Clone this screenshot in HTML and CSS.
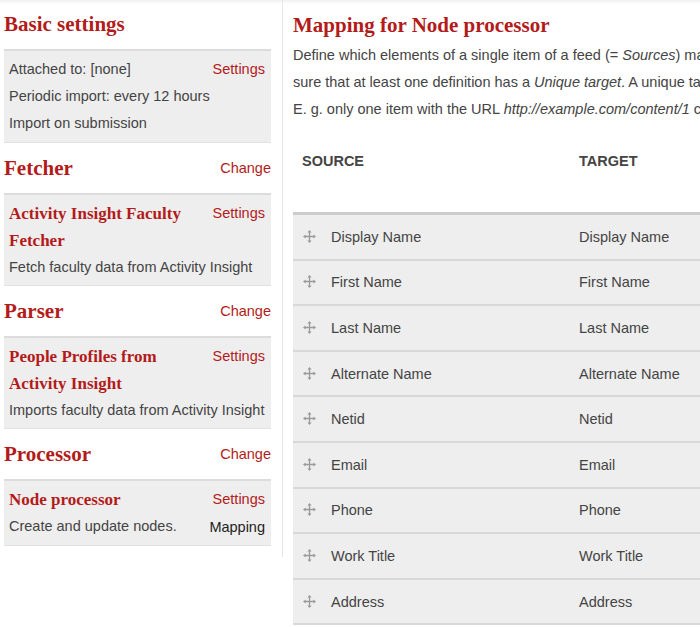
FILE: index.html
```html
<!DOCTYPE html>
<html>
<head>
<meta charset="utf-8">
<title>Feeds importer</title>
<link rel="stylesheet" href="styles.css">
</head>
<body>
<div class="page">
  <aside class="sidebar">
    <section class="group">
      <div class="group-head"><h2 class="group-title">Basic settings</h2></div>
      <div class="box">
        <div class="box-row"><span>Attached to: [none]</span><a class="link" href="#">Settings</a></div>
        <div class="box-row"><span>Periodic import: every 12 hours</span></div>
        <div class="box-row"><span>Import on submission</span></div>
      </div>
    </section>
    <section class="group">
      <div class="group-head"><h2 class="group-title">Fetcher</h2><a class="link" href="#">Change</a></div>
      <div class="box plugin">
        <div class="plugin-main">
          <h3 class="plugin-title">Activity Insight Faculty Fetcher</h3>
          <p class="plugin-desc">Fetch faculty data from Activity Insight</p>
        </div>
        <div class="plugin-links"><a class="link" href="#">Settings</a></div>
      </div>
    </section>
    <section class="group">
      <div class="group-head"><h2 class="group-title">Parser</h2><a class="link" href="#">Change</a></div>
      <div class="box plugin">
        <div class="plugin-main">
          <h3 class="plugin-title">People Profiles from Activity Insight</h3>
          <p class="plugin-desc">Imports faculty data from Activity Insight</p>
        </div>
        <div class="plugin-links"><a class="link" href="#">Settings</a></div>
      </div>
    </section>
    <section class="group">
      <div class="group-head"><h2 class="group-title">Processor</h2><a class="link" href="#">Change</a></div>
      <div class="box plugin">
        <div class="plugin-main">
          <h3 class="plugin-title">Node processor</h3>
          <p class="plugin-desc">Create and update nodes.</p>
        </div>
        <div class="plugin-links"><a class="link" href="#">Settings</a><a class="link active" href="#">Mapping</a></div>
      </div>
    </section>
  </aside>

  <main class="content">
    <h1 class="content-title">Mapping for Node processor</h1>
    <p class="intro">Define which elements of a single item of a feed (= <em>Sources</em>) map to which content pieces in Drupal (= <em>Targets</em>). Make<br>sure that at least one definition has a <em>Unique target</em>. A unique target means that a value for a target can only occur once.<br>E. g. only one item with the URL <em>http://example.com/content/1</em> can exist.</p>

    <table class="mapping">
      <thead>
        <tr><th class="col-source">Source</th><th class="col-target">Target</th><th class="col-config">Target configuration</th></tr>
      </thead>
      <tbody>
        <tr><td><span class="drag"><svg width="13" height="13" viewBox="0 0 13 13"><path d="M6.5 2v9M2 6.5h9" stroke="#9a9a9a" stroke-width="1.3" fill="none"/><path d="M6.5 0L4.4 2.6h4.2zM6.5 13l-2.1-2.6h4.2zM0 6.5l2.6-2.1v4.2zM13 6.5l-2.6-2.1v4.2z" fill="#9a9a9a"/></svg></span>Display Name</td><td>Display Name</td><td></td></tr>
        <tr><td><span class="drag"><svg width="13" height="13" viewBox="0 0 13 13"><path d="M6.5 2v9M2 6.5h9" stroke="#9a9a9a" stroke-width="1.3" fill="none"/><path d="M6.5 0L4.4 2.6h4.2zM6.5 13l-2.1-2.6h4.2zM0 6.5l2.6-2.1v4.2zM13 6.5l-2.6-2.1v4.2z" fill="#9a9a9a"/></svg></span>First Name</td><td>First Name</td><td></td></tr>
        <tr><td><span class="drag"><svg width="13" height="13" viewBox="0 0 13 13"><path d="M6.5 2v9M2 6.5h9" stroke="#9a9a9a" stroke-width="1.3" fill="none"/><path d="M6.5 0L4.4 2.6h4.2zM6.5 13l-2.1-2.6h4.2zM0 6.5l2.6-2.1v4.2zM13 6.5l-2.6-2.1v4.2z" fill="#9a9a9a"/></svg></span>Last Name</td><td>Last Name</td><td></td></tr>
        <tr><td><span class="drag"><svg width="13" height="13" viewBox="0 0 13 13"><path d="M6.5 2v9M2 6.5h9" stroke="#9a9a9a" stroke-width="1.3" fill="none"/><path d="M6.5 0L4.4 2.6h4.2zM6.5 13l-2.1-2.6h4.2zM0 6.5l2.6-2.1v4.2zM13 6.5l-2.6-2.1v4.2z" fill="#9a9a9a"/></svg></span>Alternate Name</td><td>Alternate Name</td><td></td></tr>
        <tr><td><span class="drag"><svg width="13" height="13" viewBox="0 0 13 13"><path d="M6.5 2v9M2 6.5h9" stroke="#9a9a9a" stroke-width="1.3" fill="none"/><path d="M6.5 0L4.4 2.6h4.2zM6.5 13l-2.1-2.6h4.2zM0 6.5l2.6-2.1v4.2zM13 6.5l-2.6-2.1v4.2z" fill="#9a9a9a"/></svg></span>Netid</td><td>Netid</td><td></td></tr>
        <tr><td><span class="drag"><svg width="13" height="13" viewBox="0 0 13 13"><path d="M6.5 2v9M2 6.5h9" stroke="#9a9a9a" stroke-width="1.3" fill="none"/><path d="M6.5 0L4.4 2.6h4.2zM6.5 13l-2.1-2.6h4.2zM0 6.5l2.6-2.1v4.2zM13 6.5l-2.6-2.1v4.2z" fill="#9a9a9a"/></svg></span>Email</td><td>Email</td><td></td></tr>
        <tr><td><span class="drag"><svg width="13" height="13" viewBox="0 0 13 13"><path d="M6.5 2v9M2 6.5h9" stroke="#9a9a9a" stroke-width="1.3" fill="none"/><path d="M6.5 0L4.4 2.6h4.2zM6.5 13l-2.1-2.6h4.2zM0 6.5l2.6-2.1v4.2zM13 6.5l-2.6-2.1v4.2z" fill="#9a9a9a"/></svg></span>Phone</td><td>Phone</td><td></td></tr>
        <tr><td><span class="drag"><svg width="13" height="13" viewBox="0 0 13 13"><path d="M6.5 2v9M2 6.5h9" stroke="#9a9a9a" stroke-width="1.3" fill="none"/><path d="M6.5 0L4.4 2.6h4.2zM6.5 13l-2.1-2.6h4.2zM0 6.5l2.6-2.1v4.2zM13 6.5l-2.6-2.1v4.2z" fill="#9a9a9a"/></svg></span>Work Title</td><td>Work Title</td><td></td></tr>
        <tr><td><span class="drag"><svg width="13" height="13" viewBox="0 0 13 13"><path d="M6.5 2v9M2 6.5h9" stroke="#9a9a9a" stroke-width="1.3" fill="none"/><path d="M6.5 0L4.4 2.6h4.2zM6.5 13l-2.1-2.6h4.2zM0 6.5l2.6-2.1v4.2zM13 6.5l-2.6-2.1v4.2z" fill="#9a9a9a"/></svg></span>Address</td><td>Address</td><td></td></tr>
      </tbody>
    </table>
  </main>
</div>
</body>
</html>
```

FILE: styles.css
```css
html, body {
  margin: 0;
  padding: 0;
  overflow: hidden;
}
body {
  background: linear-gradient(#f0f0f0, #ffffff 4px) no-repeat #ffffff;
  font-family: "Liberation Sans", Arial, Helvetica, sans-serif;
  font-size: 14.5px;
  color: #444444;
}
a { text-decoration: none; }

.page {
  display: flex;
  align-items: flex-start;
  padding-left: 4px;
  width: 1000px;
}

/* Sidebar */
.sidebar {
  width: 267px;
  flex: none;
  padding-right: 11px;
  padding-bottom: 11px;
  border-right: 1px solid #e6e6e6;
}
.group-head {
  height: 50px;
  display: flex;
  align-items: center;
  justify-content: space-between;
}
.group:first-child .group-head {
  height: 49px;
}
.group-title {
  margin: 0;
  font-family: "Liberation Serif", Georgia, serif;
  font-weight: bold;
  font-size: 21px;
  color: #b31b1b;
  line-height: 27px;
}
.link {
  color: #b31b1b;
  font-size: 14.5px;
  line-height: 27px;
}
.link.active {
  color: #222222;
}
.box {
  background: #eeeeee;
  border-top: 2px solid #dcdcdc;
  border-bottom: 1px solid #e2e2e2;
  padding: 5px 6px 5px 5px;
  line-height: 27px;
}
.box-row {
  display: flex;
  justify-content: space-between;
}
.plugin {
  display: flex;
  justify-content: space-between;
  padding-bottom: 4px;
}
.plugin-main {
  flex: 1;
  min-width: 0;
}
.plugin-title {
  margin: 0;
  max-width: 192px;
  font-family: "Liberation Serif", Georgia, serif;
  font-weight: bold;
  font-size: 17px;
  line-height: 27px;
  color: #b31b1b;
}
.plugin-desc {
  margin: 0;
  white-space: nowrap;
  line-height: 27px;
}
.plugin-links {
  display: flex;
  flex-direction: column;
  align-items: flex-end;
  flex: none;
  position: relative;
  z-index: 1;
}
.plugin-links .active {
  margin-top: 1px;
}

/* Main content */
.content {
  flex: none;
  width: 700px;
  padding-left: 10px;
}
.content-title {
  margin: 0;
  padding-top: 12px;
  font-family: "Liberation Serif", Georgia, serif;
  font-weight: bold;
  font-size: 21px;
  line-height: 27px;
  color: #b31b1b;
}
.intro {
  margin: 3px 0 0;
  line-height: 27px;
  white-space: nowrap;
}
.mapping {
  margin-top: 14px;
  width: 700px;
  border-collapse: collapse;
}
.mapping th {
  text-align: left;
  vertical-align: top;
  text-transform: uppercase;
  font-weight: bold;
  font-size: 14.5px;
  line-height: 20px;
  color: #444444;
  padding: 14px 9px 41px;
  border-bottom: 3px solid #cccccc;
}
.col-source { width: 259px; }
.col-target { width: 190px; }
.mapping td {
  background: #eeeeee;
  padding: 11.8px 9px;
  line-height: 20px;
  border-bottom: 2px solid #d8d8d8;
  white-space: nowrap;
}
.mapping td:first-child {
  padding-left: 10px;
}
.drag {
  display: inline-block;
  vertical-align: -1px;
  width: 13px;
  height: 13px;
  margin-right: 15px;
}
.drag svg { display: block; }
```
